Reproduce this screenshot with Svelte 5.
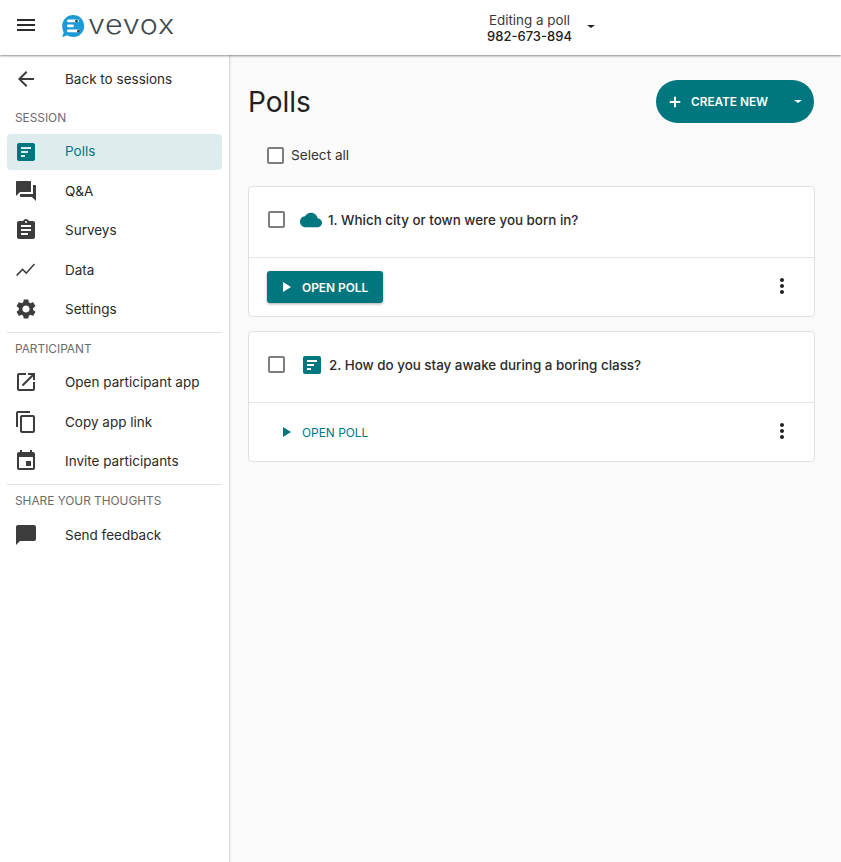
<script>
  const ic = {
    poll: 'M19 3H5c-1.1 0-2 .9-2 2v14c0 1.1.9 2 2 2h14c1.1 0 2-.9 2-2V5c0-1.1-.9-2-2-2zM7 7h10v2H7V7zm0 4h7v2H7v-2zm0 4h4v2H7v-2z',
    qa: 'M21 6h-2v9H6v2c0 .55.45 1 1 1h11l4 4V7c0-.55-.45-1-1-1zm-4 6V3c0-.55-.45-1-1-1H3c-.55 0-1 .45-1 1v14l4-4h10c.55 0 1-.45 1-1z',
    survey: 'M19 3h-4.18C14.4 1.84 13.3 1 12 1s-2.4.84-2.82 2H5c-1.1 0-2 .9-2 2v14c0 1.1.9 2 2 2h14c1.1 0 2-.9 2-2V5c0-1.1-.9-2-2-2zm-7 0c.55 0 1 .45 1 1s-.45 1-1 1-1-.45-1-1 .45-1 1-1zm2 14H7v-2h7v2zm3-4H7v-2h10v2zm0-4H7V7h10v2z',
    data: 'M3 18.200l5.600-5.600 3.700 3.700 8.700-9.700-1.100-1.100-7.600 8.500-3.700-3.700-6.400 6.500z',
    gear: 'M19.14 12.94c.04-.3.06-.61.06-.94s-.02-.64-.07-.94l2.03-1.58a.49.49 0 0 0 .12-.61l-1.92-3.32a.49.49 0 0 0-.59-.22l-2.39.96c-.5-.38-1.03-.7-1.62-.94l-.36-2.54a.48.48 0 0 0-.48-.41h-3.84c-.24 0-.43.17-.47.41l-.36 2.54c-.59.24-1.13.57-1.62.94l-2.39-.96a.49.49 0 0 0-.59.22L2.74 8.87c-.12.21-.08.47.12.61l2.03 1.58c-.05.3-.09.63-.09.94s.02.64.07.94l-2.03 1.58a.49.49 0 0 0-.12.61l1.92 3.32c.12.22.37.29.59.22l2.39-.96c.5.38 1.03.7 1.62.94l.36 2.54c.05.24.24.41.48.41h3.84c.24 0 .44-.17.47-.41l.36-2.54c.59-.24 1.13-.56 1.62-.94l2.39.96c.22.08.47 0 .59-.22l1.92-3.32c.12-.22.07-.47-.12-.61l-2.01-1.58zM12 15.6c-1.98 0-3.6-1.62-3.6-3.6s1.62-3.6 3.6-3.6 3.6 1.62 3.6 3.6-1.62 3.6-3.6 3.6z',
    open: 'M19 19H5V5h7V3H5c-1.11 0-2 .9-2 2v14c0 1.1.89 2 2 2h14c1.1 0 2-.9 2-2v-7h-2v7zM14 3v2h3.59l-9.83 9.83 1.41 1.41L19 6.41V10h2V3h-7z',
    copy: 'M16 1H4c-1.1 0-2 .9-2 2v14h2V3h12V1zm3 4H8c-1.1 0-2 .9-2 2v14c0 1.1.9 2 2 2h11c1.1 0 2-.9 2-2V7c0-1.1-.9-2-2-2zm0 16H8V7h11v14z',
    event: 'M17 12h-5v5h5v-5zM16 1v2H8V1H6v2H5c-1.11 0-1.99.9-1.99 2L3 19c0 1.1.89 2 2 2h14c1.1 0 2-.9 2-2V5c0-1.1-.9-2-2-2h-1V1h-2zm3 18H5V8h14v11z',
    chat: 'M20 2H4c-1.1 0-2 .9-2 2v18l4-4h14c1.1 0 2-.9 2-2V4c0-1.1-.9-2-2-2z',
    back: 'M20 11H7.83l5.59-5.59L12 4l-8 8 8 8 1.41-1.41L7.83 13H20v-2z',
    cloud: 'M19.35 10.04C18.67 6.59 15.64 4 12 4 9.11 4 6.6 5.64 5.35 8.04 2.34 8.36 0 10.91 0 14c0 3.31 2.69 6 6 6h13c2.76 0 5-2.24 5-5 0-2.64-2.05-4.78-4.65-4.96z',
    menu: 'M3 18h18v-2H3v2zm0-5h18v-2H3v2zm0-7v2h18V6H3z',
    dots: 'M12 8c1.1 0 2-.9 2-2s-.9-2-2-2-2 .9-2 2 .9 2 2 2zm0 2c-1.1 0-2 .9-2 2s.9 2 2 2 2-.9 2-2-.9-2-2-2zm0 6c-1.1 0-2 .9-2 2s.9 2 2 2 2-.9 2-2-.9-2-2-2z',
    plus: 'M19 13.300h-5.700V19h-2.600v-5.700H5v-2.600h5.700V5h2.600v5.700H19v2.600z'
  };
  const session = [
    { label: 'Polls', icon: ic.poll, active: true },
    { label: 'Q&A', icon: ic.qa },
    { label: 'Surveys', icon: ic.survey },
    { label: 'Data', icon: ic.data },
    { label: 'Settings', icon: ic.gear }
  ];
  const participant = [
    { label: 'Open participant app', icon: ic.open },
    { label: 'Copy app link', icon: ic.copy },
    { label: 'Invite participants', icon: ic.event }
  ];
  const polls = [
    { text: '1. Which city or town were you born in?', icon: ic.cloud, wide: true, filled: true },
    { text: '2. How do you stay awake during a boring class?', icon: ic.poll, wide: false, filled: false }
  ];
</script>

<div class="page">
  <header class="top">
    <button class="burger" aria-label="Menu"><svg viewBox="0 0 24 24" width="24" height="24"><path d={ic.menu} /></svg></button>
    <div class="logo">
      <svg viewBox="0 0 24 24" width="24" height="24" class="mark">
        <path d="M12.300 1C18.500 1 23.200 5.800 23.200 12S18.500 23 12.300 23C9.500 23 7.800 22.400 6.300 21.300L1.200 23.300L2.700 18.500C1.800 16.800 1.200 14.300 1.200 12C1.200 5.800 6.100 1 12.300 1Z" fill="#1a9ad6"/>
        <rect x="6" y="5.500" width="12" height="2.800" rx="1.400" fill="#fff"/>
        <rect x="6" y="10.500" width="7" height="2.800" rx="1.400" fill="#fff"/>
        <rect x="6" y="15.500" width="13" height="2.800" rx="1.400" fill="#fff"/>
        <circle cx="15.500" cy="6.900" r="1.500" fill="#0c5f6b"/>
        <circle cx="17.500" cy="16.900" r="1.500" fill="#3c4a50"/>
      </svg>
      <span class="word">vevox</span>
    </div>
    <div class="center">
      <div class="session">
        <span class="s1">Editing a poll</span>
        <span class="s2">982-673-894</span>
      </div>
      <span class="caret dark"></span>
    </div>
  </header>

  <div class="body">
    <aside class="side">
      <a class="row back" href="#back">
        <svg viewBox="0 0 24 24" width="24" height="24"><path d={ic.back} /></svg>
        <span>Back to sessions</span>
      </a>
      <div class="label first">SESSION</div>
      {#each session as it}
        <a class="row" class:active={it.active} href="#x">
          <svg viewBox="0 0 24 24" width="24" height="24"><path d={it.icon} /></svg>
          <span>{it.label}</span>
        </a>
      {/each}
      <hr />
      <div class="label">PARTICIPANT</div>
      {#each participant as it}
        <a class="row" href="#x">
          <svg viewBox="0 0 24 24" width="24" height="24"><path d={it.icon} /></svg>
          <span>{it.label}</span>
        </a>
      {/each}
      <hr />
      <div class="label">SHARE YOUR THOUGHTS</div>
      <a class="row" href="#x">
        <svg viewBox="0 0 24 24" width="24" height="24"><path d={ic.chat} /></svg>
        <span>Send feedback</span>
      </a>
    </aside>

    <main class="main">
      <div class="head">
        <h1>Polls</h1>
        <div class="create">
          <svg viewBox="0 0 24 24" width="18" height="18"><path d={ic.plus} /></svg>
          <span>CREATE NEW</span>
          <i class="caret light"></i>
        </div>
      </div>
      <label class="select"><span class="box"></span><span>Select all</span></label>
      {#each polls as p}
        <section class="card">
          <div class="q">
            <span class="box"></span>
            <svg class="qi" class:cloud={p.wide} viewBox="0 0 24 24"><path d={p.icon} /></svg>
            <span class="qt">{p.text}</span>
          </div>
          <div class="act">
            <button class="open" class:filled={p.filled}><i class="tri"></i>OPEN POLL</button>
            <svg class="dots" viewBox="0 0 24 24" width="24" height="24"><path d={ic.dots} /></svg>
          </div>
        </section>
      {/each}
    </main>
  </div>
</div>

<style>
  :global(body) { margin: 0; background: #fff; }
  .page { width: 841px; height: 862px; display: flex; flex-direction: column; font-family: Inter, "Liberation Sans", sans-serif; color: #212121; overflow: hidden; }
  .top { height: 55px; flex: none; display: flex; align-items: center; position: relative; z-index: 2; background: #fff; box-shadow: 0 1px 2px rgba(0,0,0,.45); }
  .burger { border: 0; background: none; padding: 0; margin-left: 14px; width: 24px; height: 24px; margin-top: -5px; }
  .burger path { fill: #2b2b2b; }
  .logo { display: flex; align-items: center; margin-left: 23px; margin-top: -3px; gap: 3px; }
  .word { font-weight: 300; font-size: 27px; letter-spacing: .6px; color: #3f4a50; line-height: 24px; margin-top: -3px; display: inline-block; transform: scaleX(1.13); transform-origin: left center; }
  .center { position: absolute; left: 487px; top: 12px; display: flex; align-items: center; }
  .session { display: flex; flex-direction: column; align-items: center; font-size: 13.400px; line-height: 16px; width: 85px; white-space: nowrap; }
  .s1 { color: #3a3a3a; }
  .s2 { font-size: 13px; font-weight: 450; color: #222; }
  .caret { display: block; width: 0; height: 0; border-left: 4px solid transparent; border-right: 4px solid transparent; }
  .caret.dark { border-top: 3.500px solid #222; margin-left: 15px; margin-top: -3px; }
  .caret.light { border-top: 3.500px solid #fff; margin-left: 26px; }
  .body { flex: 1; display: flex; min-height: 0; }
  .side { width: 230px; flex: none; box-sizing: border-box; background: #fff; border-right: 1px solid #dcdcdc; box-shadow: 1px 0 2px rgba(0,0,0,.06); padding: 5px 7px 0; display: flex; flex-direction: column; position: relative; }
  .row { display: flex; align-items: center; height: 36px; margin-bottom: 3.400px; padding-left: 7px; border-radius: 4px; text-decoration: none; color: #2a2a2a; font-size: 13.500px; }
  .row svg { width: 24px; height: 24px; flex: none; margin-right: 27px; }
  .row path { fill: #3c3c3c; }
  .row.back { height: 38px; margin-bottom: 0; }
  .row.active { background: #dfecee; color: #00777f; }
  .row.active span { position: relative; top: -0.5px; }
  .row.active path { fill: #00777f; }
  .label { font-size: 11.850px; line-height: 14px; color: #6b6b6b; height: 14px; margin: 0 0 8.400px; padding-left: 8px; }
  .label.first { margin-top: 13px; margin-bottom: 8.600px; }
  hr { border: 0; border-top: 1px solid #e2e2e2; margin: 1.500px 0 9px; width: 100%; }
  .main { flex: 1; background: #fafafa; padding: 25px 26px 0 18px; min-width: 0; }
  .head { display: flex; justify-content: space-between; align-items: center; height: 43px; }
  h1 { margin: 0; font-size: 28px; font-weight: 400; color: #212121; }
  .create { width: 158px; height: 43px; box-sizing: border-box; border-radius: 22px; background: #00777f; color: #fff; display: flex; align-items: center; padding-left: 10px; font-size: 11.800px; font-weight: 600; margin-right: 1px; }
  .create svg { margin-right: 7px; }
  .create path { fill: #fff; }
  .select { display: flex; align-items: center; gap: 7px; font-size: 13.600px; color: #333; margin: 13px 0 12px 19px; height: 38px; }
  .box { display: block; box-sizing: border-box; width: 17px; height: 17px; border: 2px solid #7d7d7d; border-radius: 2px; flex: none; background: #fff; }
  .card { background: #fff; border: 1px solid #e0e0e0; border-radius: 4px; margin-bottom: 14px; height: 131px; box-sizing: border-box; width: 567px; }
  .q { height: 71px; box-sizing: border-box; padding: 0 0 5px 19px; display: flex; align-items: center; border-bottom: 1px solid #e6e6e6; }
  .qi { width: 24px; height: 24px; margin-left: 15px; margin-right: 5px; }
  .qi.cloud { width: 22px; height: 22px; margin-right: 6px; }
  .qi path { fill: #00777f; }
  .qt { font-size: 13.400px; font-weight: 450; color: #2a2a2a; }
  .act { height: 58px; box-sizing: border-box; padding: 0 20px 0 18px; display: flex; align-items: center; justify-content: space-between; }
  .open { height: 32px; width: 116px; box-sizing: border-box; border: 0; border-radius: 3px; background: transparent; color: #00777f; font-family: inherit; font-size: 11.900px; font-weight: 400; display: flex; align-items: center; padding: 0 0 0 16px; }
  .open.filled { background: #00777f; color: #fff; font-weight: 600; box-shadow: 0 1px 3px rgba(0,0,0,.35); }
  .tri { display: block; width: 0; height: 0; border-top: 5px solid transparent; border-bottom: 5px solid transparent; border-left: 8px solid currentColor; margin-right: 11px; }
  .dots { margin-bottom: 2px; }
  .dots path { fill: #222; }
</style>
